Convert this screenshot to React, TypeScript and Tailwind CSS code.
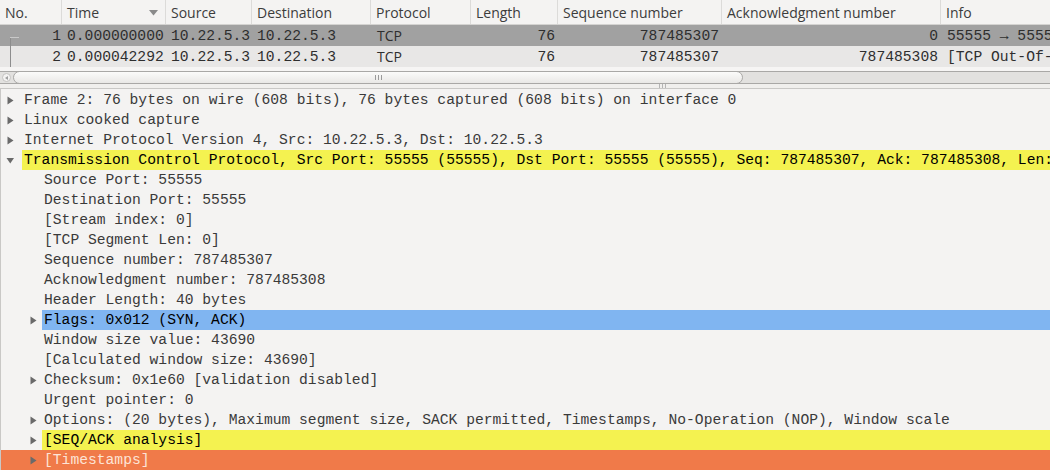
import React from "react";

const MONO = "font-['Liberation_Mono',monospace] text-[14.667px]";
const SANS = "font-['Open_Sans',sans-serif] text-[14px]";

type Col = { label: string; w: string; arrow?: boolean };
const cols: Col[] = [
  { label: "No.", w: "w-[62px]" },
  { label: "Time", w: "w-[104px]", arrow: true },
  { label: "Source", w: "w-[86px]" },
  { label: "Destination", w: "w-[119px]" },
  { label: "Protocol", w: "w-[100px]" },
  { label: "Length", w: "w-[87px]" },
  { label: "Sequence number", w: "w-[164px]" },
  { label: "Acknowledgment number", w: "w-[219px]" },
  { label: "Info", w: "flex-1" },
];

type Pkt = { no: string; time: string; src: string; dst: string; proto: string; len: string; seq: string; ack: string; info: string };
const pkts: Pkt[] = [
  { no: "1", time: "0.000000000", src: "10.22.5.3", dst: "10.22.5.3", proto: "TCP", len: "76", seq: "787485307", ack: "0", info: "55555 → 55555 [SYN] Seq=787485307" },
  { no: "2", time: "0.000042292", src: "10.22.5.3", dst: "10.22.5.3", proto: "TCP", len: "76", seq: "787485307", ack: "787485308", info: "[TCP Out-Of-Order] 55555 → 55555" },
];

function PacketRow({ p, sel }: { p: Pkt; sel: boolean }) {
  const bg = sel ? "bg-[#a1a1a1]" : "bg-[#e8e7e6]";
  return (
    <div className={`relative flex h-[21px] items-center whitespace-nowrap text-[#2e2e2e] ${bg}`}>
      <div className={`w-[62px] pr-[1px] text-right ${MONO}`}>{p.no}</div>
      <div className={`w-[104px] pl-[5px] ${MONO}`}>{p.time}</div>
      <div className={`w-[86px] pl-[5px] ${MONO}`}>{p.src}</div>
      <div className={`w-[119px] pl-[5px] ${MONO}`}>{p.dst}</div>
      <div className={`w-[100px] pl-[6px] ${SANS}`}>{p.proto}</div>
      <div className={`w-[87px] pr-[3px] text-right ${MONO}`}>{p.len}</div>
      <div className={`w-[164px] pr-[3px] text-right ${MONO}`}>{p.seq}</div>
      <div className={`w-[219px] pr-[3px] text-right ${MONO}`}>{p.ack}</div>
      <div className={`flex-1 overflow-hidden pl-[6px] ${MONO}`}>{p.info}</div>
    </div>
  );
}

type Node = { text: string; level: 0 | 1; exp?: "open" | "closed"; hl?: "yellow" | "blue" | "orange" };
const nodes: Node[] = [
  { text: "Frame 2: 76 bytes on wire (608 bits), 76 bytes captured (608 bits) on interface 0", level: 0, exp: "closed" },
  { text: "Linux cooked capture", level: 0, exp: "closed" },
  { text: "Internet Protocol Version 4, Src: 10.22.5.3, Dst: 10.22.5.3", level: 0, exp: "closed" },
  { text: "Transmission Control Protocol, Src Port: 55555 (55555), Dst Port: 55555 (55555), Seq: 787485307, Ack: 787485308, Len: 0", level: 0, exp: "open", hl: "yellow" },
  { text: "Source Port: 55555", level: 1 },
  { text: "Destination Port: 55555", level: 1 },
  { text: "[Stream index: 0]", level: 1 },
  { text: "[TCP Segment Len: 0]", level: 1 },
  { text: "Sequence number: 787485307", level: 1 },
  { text: "Acknowledgment number: 787485308", level: 1 },
  { text: "Header Length: 40 bytes", level: 1 },
  { text: "Flags: 0x012 (SYN, ACK)", level: 1, exp: "closed", hl: "blue" },
  { text: "Window size value: 43690", level: 1 },
  { text: "[Calculated window size: 43690]", level: 1 },
  { text: "Checksum: 0x1e60 [validation disabled]", level: 1, exp: "closed" },
  { text: "Urgent pointer: 0", level: 1 },
  { text: "Options: (20 bytes), Maximum segment size, SACK permitted, Timestamps, No-Operation (NOP), Window scale", level: 1, exp: "closed" },
  { text: "[SEQ/ACK analysis]", level: 1, exp: "closed", hl: "yellow" },
  { text: "[Timestamps]", level: 1, exp: "closed", hl: "orange" },
];

function Arrow({ open }: { open: boolean }) {
  return open ? (
    <svg width="9" height="9" viewBox="0 0 9 9">
      <path d="M0.5 2 L8 2 L4.25 7.5 Z" fill="#6a6a6a" />
    </svg>
  ) : (
    <svg width="9" height="9" viewBox="0 0 9 9">
      <path d="M1.5 0.5 L7.5 4.5 L1.5 8.5 Z" fill="#6a6a6a" />
    </svg>
  );
}

function TreeRow({ n }: { n: Node }) {
  const rowBg = n.hl === "orange" ? "bg-[#f07a49]" : "";
  const txtBg =
    n.hl === "yellow" ? "bg-[#f4f250] text-black" : n.hl === "blue" ? "bg-[#80b5f1] text-black" : n.hl === "orange" ? "text-[#fde4d6]" : "text-[#3a3a3a]";
  const indent = n.level === 0 ? "w-[21px] pl-[5px]" : "w-[41px] pl-[28px]";
  return (
    <div className={`flex h-[20px] items-stretch whitespace-nowrap ${rowBg}`}>
      <div className={`flex shrink-0 items-center ${indent}`}>{n.exp && <Arrow open={n.exp === "open"} />}</div>
      <div className={`flex flex-1 items-center overflow-hidden pl-[2px] ${MONO} ${txtBg}`}>{n.text}</div>
    </div>
  );
}

export default function App() {
  return (
    <div className="flex h-[470px] w-[1050px] flex-col overflow-hidden bg-[#f2f1f0]">
      {/* packet list */}
      <div className="relative flex flex-col">
        <div className={`flex h-[25px] items-stretch border-b border-[#d4d3d1] bg-[#f4f3f2] text-[#3c3c3c] ${SANS}`}>
          {cols.map((c, i) => (
            <div key={c.label} className={`relative flex items-center pl-[5px] ${c.w} ${i < cols.length - 1 ? "border-r border-[#dcdbd9]" : ""}`}>
              <span>{c.label}</span>
              {c.arrow && (
                <svg className="absolute right-[7px] top-[10px]" width="9" height="6" viewBox="0 0 9 6">
                  <path d="M0 0 L9 0 L4.5 5.5 Z" fill="#8a8a8a" />
                </svg>
              )}
            </div>
          ))}
        </div>
        {pkts.map((p, i) => (
          <PacketRow key={p.no} p={p} sel={i === 0} />
        ))}
        {/* related packet indicator */}
        <div className="absolute left-[10px] top-[37px] h-[30px] w-[1px] bg-[#8d8d8d]" />
        <div className="absolute left-[10px] top-[37px] h-[1px] w-[9px] bg-[#c9c9c9]" />
        <div className="h-[4px] bg-[#f6f5f4]" />
        {/* horizontal scrollbar */}
        <div className="relative h-[13px] border-y border-[#a9a8a6] bg-[#e2e1df]">
          <div className="absolute left-[2px] top-[1px] flex h-[9px] w-[9px] items-center justify-center rounded-full border border-[#c4c3c1] bg-[#f4f3f2]">
            <svg width="3" height="4" viewBox="0 0 3 4">
              <path d="M3 0 L0 2 L3 4 Z" fill="#a0a0a0" />
            </svg>
          </div>
          <div className="absolute left-[13px] top-[-1px] flex h-[13px] w-[730px] items-center justify-center rounded-[7px] border border-[#a9a8a6] bg-gradient-to-b from-[#fbfbfa] to-[#e9e8e6]">
            <div className="flex gap-[2px]">
              <div className="h-[5px] w-[1px] bg-[#9a9a9a]" />
              <div className="h-[5px] w-[1px] bg-[#9a9a9a]" />
              <div className="h-[5px] w-[1px] bg-[#9a9a9a]" />
            </div>
          </div>
        </div>
      </div>
      {/* splitter */}
      <div className="flex h-[7px] items-center justify-center bg-[#f0efed] pl-[275px]">
        <div className="flex gap-[2px]">
          <div className="h-[4px] w-[1px] bg-[#b5b5b5]" />
          <div className="h-[4px] w-[1px] bg-[#b5b5b5]" />
          <div className="h-[4px] w-[1px] bg-[#b5b5b5]" />
        </div>
      </div>
      {/* detail tree */}
      <div className="flex flex-1 flex-col border-l border-t border-[#c9c8c6] bg-[#f4f3f2] pt-[1px]">
        {nodes.map((n, i) => (
          <TreeRow key={i} n={n} />
        ))}
      </div>
    </div>
  );
}
